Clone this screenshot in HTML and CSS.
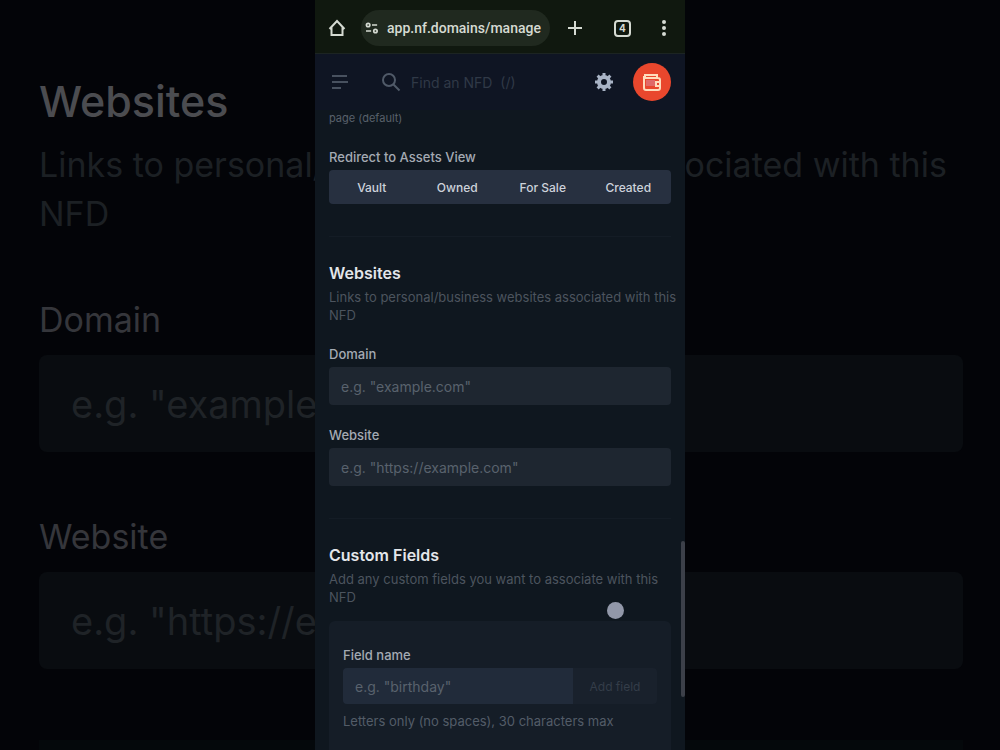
FILE: index.html
```
<!DOCTYPE html>
<html lang="en">
  <head>
    <meta charset="UTF-8" />
    <meta name="viewport" content="width=device-width, initial-scale=1.0" />
    <title>NFD - Manage</title>
    <link rel="stylesheet" href="styles.css">
  </head>
  <body>
    <div class="stage">
      <!-- enlarged copy of the form behind the phone -->
      <div class="backdrop">
        <h2>Websites</h2>
        <p>Links to personal/business websites associated with this NFD</p>
        <label for="backDomain">Domain</label>
        <input id="backDomain" type="text" placeholder='e.g. "example.com"' />
        <label for="backWebsite">Website</label>
        <input id="backWebsite" type="text" placeholder='e.g. "https://example.com"' />
        <div class="backdrop__end"></div>
      </div>

      <div class="phone">
        <div class="browser">
          <button class="icon-btn" aria-label="Home">
            <svg width="20" height="20" viewBox="0 0 20 20" fill="none" stroke="currentColor" stroke-width="2">
              <path d="M2.500 11 10 3l7.500 8M4.500 9.500V17h11V9.500" />
            </svg>
          </button>
          <div class="address">
            <svg width="14" height="12" viewBox="0 0 16 14" fill="none" stroke="currentColor" stroke-width="2">
              <circle cx="3.500" cy="3.500" r="2" />
              <path d="M8 3.500h6M1 10.500h6" />
              <circle cx="12" cy="10.500" r="2" />
            </svg>
            <input type="text" aria-label="Address" value="app.nf.domains/manage" />
          </div>
          <div class="browser__actions">
            <button class="icon-btn" aria-label="New tab">
              <svg width="18" height="18" viewBox="0 0 18 18" stroke="currentColor" stroke-width="2">
                <path d="M9 2v14M2 9h14" />
              </svg>
            </button>
            <button class="icon-btn tabs" aria-label="Tabs">4</button>
            <button class="icon-btn" aria-label="Menu">
              <svg width="6" height="18" viewBox="0 0 6 18" fill="currentColor">
                <circle cx="3" cy="3" r="2" />
                <circle cx="3" cy="9" r="2" />
                <circle cx="3" cy="15" r="2" />
              </svg>
            </button>
          </div>
        </div>

        <header class="header">
          <button class="icon-btn header__menu" aria-label="Open menu">
            <svg width="18" height="16" viewBox="0 0 18 16" stroke="currentColor" stroke-width="2">
              <path d="M1 2h15M1 8h16M1 14h9" />
            </svg>
          </button>
          <div class="search">
            <svg width="20" height="20" viewBox="0 0 20 20" fill="none" stroke="currentColor" stroke-width="2">
              <circle cx="8" cy="8" r="6" />
              <path d="m12.500 12.500 6 6" />
            </svg>
            <input type="text" aria-label="Search" placeholder="Find an NFD  (/)" />
          </div>
          <button class="icon-btn header__settings" aria-label="Settings">
            <svg width="18" height="18" viewBox="0 0 18 18" fill="none" stroke="currentColor">
              <circle cx="9" cy="9" r="5" stroke-width="4" />
              <path d="M9 0v3M9 15v3M0 9h3M15 9h3M2.600 2.600l2.200 2.200M13.200 13.200l2.200 2.200M2.600 15.400l2.200-2.200M13.200 4.800l2.200-2.200" stroke-width="3" />
            </svg>
          </button>
          <button class="wallet" aria-label="Wallet">
            <svg width="20" height="18" viewBox="0 0 20 18" fill="none" stroke="currentColor" stroke-width="2">
              <path d="M4 7h9v6H4z" fill="#e06a68" stroke="none" />
              <path d="M2 3v12a2 2 0 0 0 2 2h12a2 2 0 0 0 2-2V7a2 2 0 0 0-2-2H3V2h12v3" />
              <path d="M18 9h-4v4h4" />
            </svg>
          </button>
        </header>

        <main class="content">
          <p class="hint">page (default)</p>

          <section class="section section--assets">
            <span class="label" id="assetsLabel">Redirect to Assets View</span>
            <div class="segments" role="group" aria-labelledby="assetsLabel">
              <button>Vault</button>
              <button>Owned</button>
              <button>For Sale</button>
              <button>Created</button>
            </div>
          </section>

          <section class="section">
            <h2>Websites</h2>
            <p class="desc">Links to personal/business websites associated with this NFD</p>
            <div class="field">
              <label class="label" for="domain">Domain</label>
              <input id="domain" type="text" placeholder='e.g. "example.com"' />
            </div>
            <div class="field">
              <label class="label" for="website">Website</label>
              <input id="website" type="text" placeholder='e.g. "https://example.com"' />
            </div>
          </section>

          <section class="section">
            <h2>Custom Fields</h2>
            <p class="desc">Add any custom fields you want to associate with this NFD</p>
            <div class="card">
              <label class="label" for="fieldName">Field name</label>
              <div class="card__row">
                <input id="fieldName" type="text" placeholder='e.g. "birthday"' />
                <button>Add field</button>
              </div>
              <p class="card__note">Letters only (no spaces), 30 characters max</p>
            </div>
          </section>
        </main>

        <div class="scrollbar"></div>
        <div class="touch"></div>
      </div>
    </div>
  </body>
</html>
```
FILE: styles.css
```
* {
  margin: 0;
  padding: 0;
  box-sizing: border-box;
}

body {
  background-color: #030408;
  color: #e3e6ea;
  font-family: Inter, "Liberation Sans", sans-serif;
  font-size: 13px;
}

button,
input {
  border: none;
  outline: none;
  background: none;
  color: inherit;
  font-family: inherit;
  font-size: inherit;
}
button {
  cursor: pointer;
}
svg {
  display: block;
  flex-shrink: 0;
}

.stage {
  display: grid;
  height: 100vh;
  overflow: hidden;
}
.stage > div {
  grid-area: 1 / 1;
  min-height: 0;
}

/* backdrop */
.backdrop {
  display: flex;
  flex-direction: column;
  padding: 76px 37px 0 39px;
  color: #35363b;
  font-size: 34px;
  overflow: hidden;
}
.backdrop h2 {
  color: #4b4c50;
  font-size: 43px;
  line-height: 50px;
  font-weight: 500;
}
.backdrop p {
  margin: 14px 0 60px;
  color: #1c2024;
  line-height: 49px;
}
.backdrop label {
  line-height: 44px;
  margin-bottom: 13px;
}
.backdrop input {
  flex-shrink: 0;
  height: 97px;
  margin-bottom: 63px;
  padding: 0 32px;
  border-radius: 8px;
  background-color: #090c10;
  font-size: 38px;
}
.backdrop input::placeholder {
  color: #1f2327;
  opacity: 1;
}
.backdrop__end {
  flex: 1;
  margin-top: 8px;
  background-color: #04080b;
}

/* phone */
.phone {
  position: relative;
  justify-self: center;
  width: 37%;
  min-width: 320px;
  background-color: #0f171f;
  overflow: hidden;
}

.browser {
  display: flex;
  align-items: center;
  height: 54px;
  padding: 3px 18px 0 12px;
  background-color: #10180f;
  border-bottom: 1px solid #1c2422;
  color: #d5dad2;
}
.browser__actions {
  display: flex;
  align-items: center;
  gap: 30px;
}
.icon-btn {
  display: flex;
  align-items: center;
  justify-content: center;
}
.address {
  display: flex;
  align-items: center;
  flex: 1;
  gap: 8px;
  min-width: 0;
  height: 36px;
  margin: 0 16px 0 14px;
  padding: 0 4px;
  border-radius: 18px;
  background-color: #20291f;
}
.address input {
  flex: 1;
  min-width: 0;
  font-family: Roboto, sans-serif;
  font-size: 14px;
  font-weight: 500;
}
.tabs {
  width: 17px;
  height: 17px;
  border: 2px solid #d5dad2;
  border-radius: 4px;
  font-size: 10px;
  font-weight: 700;
}

.header {
  display: flex;
  align-items: center;
  height: 56px;
  padding: 0 14px 0 16px;
  background-color: #0f1523;
}
.header__menu {
  color: #48515f;
}
.search {
  display: flex;
  align-items: center;
  flex: 1;
  gap: 10px;
  min-width: 0;
  margin-left: 32px;
  color: #505a68;
}
.search input {
  flex: 1;
  min-width: 0;
  font-size: 14px;
}
.search input::placeholder {
  color: #303947;
  opacity: 1;
  white-space: pre;
}
.header__settings {
  margin-right: 20px;
  color: #a9b4c6;
}
.wallet {
  display: flex;
  align-items: center;
  justify-content: center;
  width: 38px;
  height: 38px;
  border-radius: 50%;
  background-color: #e9472d;
  color: #ffdcbc;
}

.content {
  padding: 0 14px;
}
.hint {
  color: #59616b;
  font-size: 11px;
  line-height: 16px;
}
.section {
  border-bottom: 1px solid #141c25;
  padding: 26px 0 32px;
}
.section--assets {
  padding: 23px 0 32px;
}
.section h2 {
  color: #e3e6ea;
  font-size: 16px;
  line-height: 20px;
  font-weight: 600;
}
.desc {
  margin: 5px -8px 0 0;
  color: #4c545e;
  line-height: 18px;
}
.label {
  display: block;
  color: #a4aab3;
  line-height: 16px;
  font-weight: 500;
  margin-bottom: 5px;
}

.segments {
  display: grid;
  grid-template-columns: repeat(4, 1fr);
  height: 34px;
  border-radius: 4px;
  background-color: #273040;
}
.segments button {
  color: #cdd2db;
  font-size: 12px;
  font-weight: 500;
}

.field {
  margin-top: 22px;
}
.field input {
  display: block;
  width: 100%;
  height: 38px;
  padding: 0 12px;
  border-radius: 4px;
  background-color: #1e2630;
  font-size: 14px;
}
.field input::placeholder,
.card input::placeholder {
  color: #59626d;
  opacity: 1;
}

.card {
  margin-top: 15px;
  padding: 26px 14px 40px;
  border-radius: 6px;
  background-color: #151d27;
}
.card__row {
  display: flex;
  height: 36px;
  border-radius: 4px;
  background-color: #19212c;
  overflow: hidden;
}
.card__row input {
  flex: 1;
  min-width: 0;
  padding: 0 12px;
  background-color: #212b3a;
  font-size: 14px;
}
.card__row button {
  width: 84px;
  color: #343d49;
  font-size: 12px;
}
.card__note {
  margin-top: 8px;
  color: #535c68;
  line-height: 18px;
}

/* overlays */
.scrollbar {
  position: absolute;
  top: 541px;
  right: 0;
  width: 4px;
  height: 156px;
  border-radius: 2px;
  background-color: #3c4049;
}
.touch {
  position: absolute;
  top: 602px;
  right: 61px;
  width: 17px;
  height: 17px;
  border-radius: 50%;
  background-color: #9298a9;
}
```
